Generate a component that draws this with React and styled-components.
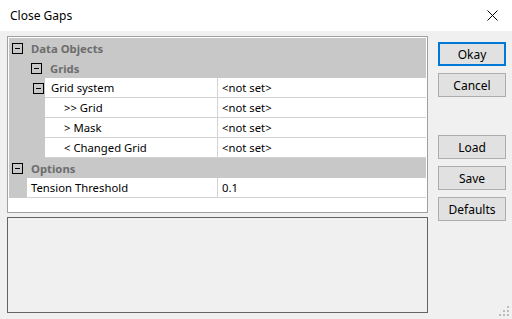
import React from 'react';
import styled, { createGlobalStyle } from 'styled-components';

const GlobalStyle = createGlobalStyle`
  html, body {
    margin: 0;
    padding: 0;
    background: #f0f0f0;
  }
  body {
    font-family: 'Noto Sans', 'Liberation Sans', sans-serif;
    font-size: 11.3px;
    color: #000;
  }
`;

const Window = styled.div`
  position: relative;
  width: 512px;
  height: 319px;
  overflow: hidden;
  background: #f0f0f0;
  display: flex;
  flex-direction: column;
`;

const TitleBar = styled.div`
  height: 31px;
  flex: none;
  background: #fff;
  display: flex;
  align-items: center;
  justify-content: space-between;
  padding: 0 10px 0 10px;
  box-sizing: border-box;
  font-size: 12px;
  .close {
    width: 30px;
    display: flex;
    justify-content: center;
    margin-right: -5px;
  }
`;

const Body = styled.div`
  flex: 1;
  display: flex;
  padding: 5px 0 0 7px;
`;

const LeftColumn = styled.div`
  display: flex;
  flex-direction: column;
  gap: 4px;
  width: 421px;
`;

const GridPanel = styled.div`
  height: 177px;
  box-sizing: border-box;
  border: 1px solid #a0a0a0;
  padding: 1px;
  background: #fff;
`;

const InfoPanel = styled.div`
  height: 96px;
  box-sizing: border-box;
  border: 1px solid #646464;
  background: #f0f0f0;
`;

const CategoryRow = styled.div`
  height: 20px;
  background: #c8c8c8;
  display: flex;
  align-items: center;
  padding-left: ${(p) => p.$indent}px;
  font-weight: bold;
  color: #6d6d6d;
  span {
    margin-left: 8px;
  }
`;

const Toggle = styled.div`
  width: 9px;
  height: 9px;
  border: 1px solid #000;
  position: relative;
  flex: none;
  margin-left: ${(p) => p.$offset || 0}px;
  &::after {
    content: '';
    position: absolute;
    left: 2px;
    right: 2px;
    top: 4px;
    height: 1px;
    background: #000;
  }
`;

const PropRow = styled.div`
  height: 20px;
  display: flex;
`;

const Strip = styled.div`
  width: ${(p) => p.$width}px;
  flex: none;
  background: #c8c8c8;
  display: flex;
  align-items: center;
`;

const NameCell = styled.div`
  width: ${(p) => 209 - p.$strip}px;
  box-sizing: border-box;
  flex: none;
  padding-left: ${(p) => p.$pad}px;
  border-right: 1px solid #d3d3d3;
  border-bottom: 1px solid #d3d3d3;
  display: flex;
  align-items: center;
  background: #fff;
  white-space: nowrap;
`;

const ValueCell = styled.div`
  flex: 1;
  padding-left: 4px;
  border-bottom: 1px solid #d3d3d3;
  display: flex;
  align-items: center;
  background: #fff;
`;

const RightColumn = styled.div`
  margin-left: 10px;
  padding-top: 6px;
  display: flex;
  flex-direction: column;
`;

const Button = styled.button`
  width: 68px;
  height: 24px;
  box-sizing: border-box;
  background: #e1e1e1;
  border: ${(p) => (p.$default ? '2px solid #0078d7' : '1px solid #adadad')};
  font-family: inherit;
  font-size: 12px;
  color: #000;
  padding: 0;
  margin-top: ${(p) => p.$gap || 0}px;
`;

const Grip = styled.svg`
  position: absolute;
  right: 3px;
  bottom: 3px;
`;

const props = [
  { name: '>> Grid', value: '<not set>' },
  { name: '> Mask', value: '<not set>' },
  { name: '< Changed Grid', value: '<not set>' },
];

export default function App() {
  return (
    <>
      <GlobalStyle />
      <Window>
        <TitleBar>
          <span>Close Gaps</span>
          <div className="close">
            <svg width="11" height="11" viewBox="0 0 11 11">
              <path d="M0.5 0.5 L10.5 10.5 M10.5 0.5 L0.5 10.5" stroke="#000" strokeWidth="1" />
            </svg>
          </div>
        </TitleBar>
        <Body>
          <LeftColumn>
            <GridPanel>
              <CategoryRow $indent={3}>
                <Toggle />
                <span>Data Objects</span>
              </CategoryRow>
              <CategoryRow $indent={22}>
                <Toggle />
                <span>Grids</span>
              </CategoryRow>
              <PropRow>
                <Strip $width={36}>
                  <Toggle $offset={24} />
                </Strip>
                <NameCell $strip={36} $pad={6}>Grid system</NameCell>
                <ValueCell>&lt;not set&gt;</ValueCell>
              </PropRow>
              {props.map((p) => (
                <PropRow key={p.name}>
                  <Strip $width={36} />
                  <NameCell $strip={36} $pad={19}>{p.name}</NameCell>
                  <ValueCell>{p.value}</ValueCell>
                </PropRow>
              ))}
              <CategoryRow $indent={3}>
                <Toggle />
                <span>Options</span>
              </CategoryRow>
              <PropRow>
                <Strip $width={18} />
                <NameCell $strip={18} $pad={4}>Tension Threshold</NameCell>
                <ValueCell>0.1</ValueCell>
              </PropRow>
            </GridPanel>
            <InfoPanel />
          </LeftColumn>
          <RightColumn>
            <Button $default>Okay</Button>
            <Button $gap={7}>Cancel</Button>
            <Button $gap={38}>Load</Button>
            <Button $gap={7}>Save</Button>
            <Button $gap={7}>Defaults</Button>
          </RightColumn>
        </Body>
        <Grip width="10" height="10" viewBox="0 0 10 10">
          <rect x="8" y="0" width="2" height="2" fill="#bcbcbc" />
          <rect x="4" y="4" width="2" height="2" fill="#bcbcbc" />
          <rect x="8" y="4" width="2" height="2" fill="#bcbcbc" />
          <rect x="0" y="8" width="2" height="2" fill="#bcbcbc" />
          <rect x="4" y="8" width="2" height="2" fill="#bcbcbc" />
          <rect x="8" y="8" width="2" height="2" fill="#bcbcbc" />
        </Grip>
      </Window>
    </>
  );
}
